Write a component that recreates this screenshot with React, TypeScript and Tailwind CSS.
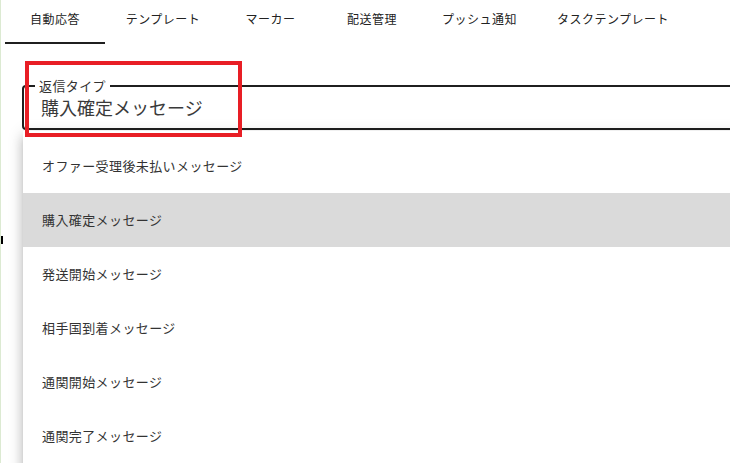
import React from "react";

const tabs = [
  { label: "自動応答", w: "w-[100px]" },
  { label: "テンプレート", w: "w-[116px]" },
  { label: "マーカー", w: "w-[99px]" },
  { label: "配送管理", w: "w-[104px]" },
  { label: "プッシュ通知", w: "w-[111px]" },
  { label: "タスクテンプレート", w: "w-[156px]" },
];

const items = [
  "オファー受理後未払いメッセージ",
  "購入確定メッセージ",
  "発送開始メッセージ",
  "相手国到着メッセージ",
  "通関開始メッセージ",
  "通関完了メッセージ",
];

export default function App() {
  return (
    <div
      className="relative w-[730px] h-[463px] overflow-hidden bg-white border-l border-[#dcead2]"
      style={{ fontFamily: '"Noto Sans CJK JP", "Noto Sans", sans-serif' }}
    >
      {/* Tabs */}
      <div className="flex h-[45px] pl-[4px]">
        {tabs.map((t, i) => (
          <div
            key={t.label}
            className={`${t.w} relative flex justify-center pt-[10px] text-[12px] leading-[18px] tracking-[0.5px] text-[#222]`}
          >
            {t.label}
            {i === 0 && (
              <div className="absolute left-0 right-0 bottom-[1px] h-[2px] bg-[#1f1f1f]" />
            )}
          </div>
        ))}
      </div>

      {/* Select field */}
      <div className="ml-[21px] mt-[40px] w-[740px]">
        <div className="relative h-[45px] border-2 border-[#1f1f1f] rounded-[4px] flex items-center pl-[17px] text-[18px] text-[#3a3a3a]">
          <span className="absolute left-[11px] top-[-9px] px-[4px] bg-white text-[13px] leading-[16px] tracking-[0.4px] text-[#333]">
            返信タイプ
          </span>
          購入確定メッセージ
        </div>
      </div>

      {/* small mark at left edge */}
      <div className="absolute left-0 top-[236px] w-[2px] h-[8px] bg-black" />

      {/* Dropdown menu */}
      <div className="absolute left-[22px] top-[131px] w-[740px] h-[360px] bg-white pt-[8px] shadow-[0_5px_5px_-3px_rgba(0,0,0,0.2),0_8px_10px_1px_rgba(0,0,0,0.14),0_3px_14px_2px_rgba(0,0,0,0.12)]">
        {items.map((it, i) => (
          <div
            key={it}
            className={`h-[54px] flex items-center pl-[19px] text-[13px] tracking-[0.4px] text-[#333] ${
              i === 1 ? "bg-[#dadada]" : ""
            }`}
          >
            {it}
          </div>
        ))}
      </div>

      {/* Red annotation box */}
      <div className="absolute left-[24px] top-[61px] w-[217px] h-[76px] border-4 border-[#e81e25]" />
    </div>
  );
}
